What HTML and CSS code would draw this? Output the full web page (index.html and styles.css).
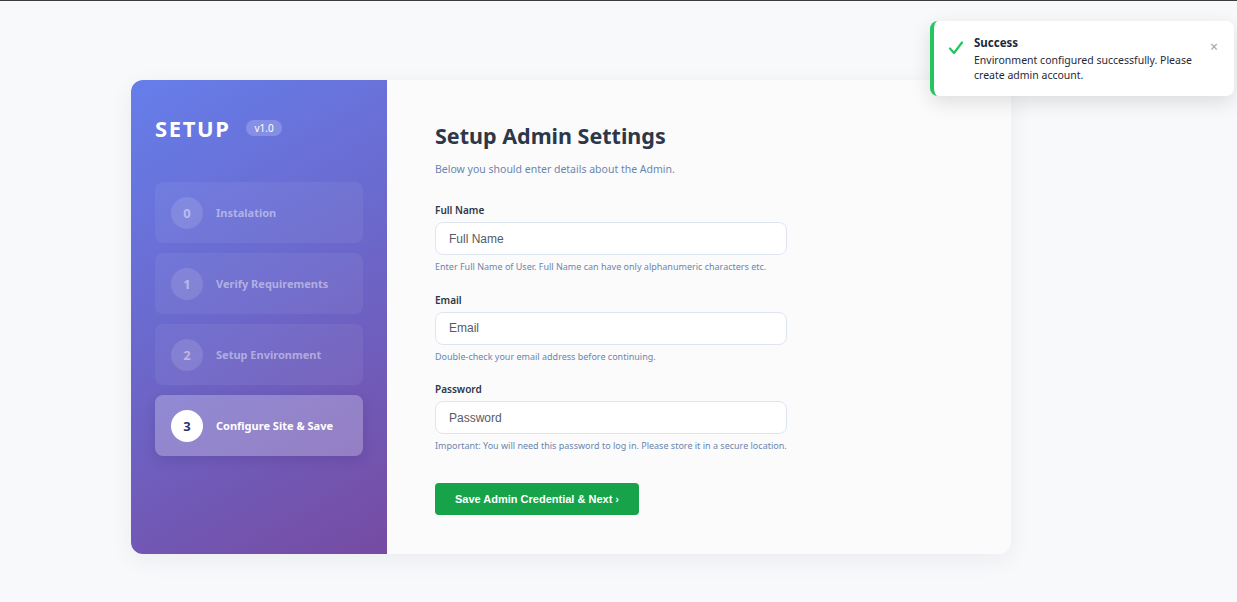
FILE: index.html
```html
<!DOCTYPE html>
<html lang="en">
<head>
    <meta charset="UTF-8">
    <meta name="viewport" content="width=device-width, initial-scale=1.0">
    <title>Setup</title>

    <link rel="stylesheet" href="styles.css">

</head>
<body>

    <div id="wrapper">

        <div class="setup_card">

            <aside class="sidebar">

                <div class="brand">
                    <span class="brand_title">SETUP</span>
                    <span class="brand_version">v1.0</span>
                </div>

                <ul class="steps">
                    <li class="step">
                        <span class="step_number">0</span>
                        <span class="step_label">Instalation</span>
                    </li>
                    <li class="step">
                        <span class="step_number">1</span>
                        <span class="step_label">Verify Requirements</span>
                    </li>
                    <li class="step">
                        <span class="step_number">2</span>
                        <span class="step_label">Setup Environment</span>
                    </li>
                    <li class="step active">
                        <span class="step_number">3</span>
                        <span class="step_label">Configure Site &amp; Save</span>
                    </li>
                </ul>

            </aside>

            <main class="content">

                <h1 class="title">Setup Admin Settings</h1>
                <p class="subtitle">Below you should enter details about the Admin.</p>

                <form class="admin_form">

                    <div class="field">
                        <label for="full_name">Full Name</label>
                        <input type="text" id="full_name" placeholder="Full Name">
                        <small>Enter Full Name of User. Full Name can have only alphanumeric characters etc.</small>
                    </div>

                    <div class="field">
                        <label for="email">Email</label>
                        <input type="email" id="email" placeholder="Email">
                        <small>Double-check your email address before continuing.</small>
                    </div>

                    <div class="field">
                        <label for="password">Password</label>
                        <input type="password" id="password" placeholder="Password">
                        <small>Important: You will need this password to log in. Please store it in a secure location.</small>
                    </div>

                    <button type="button" class="btn_next">Save Admin Credential &amp; Next &rsaquo;</button>

                </form>

            </main>

        </div>

    </div>

    <div class="toast">
        <svg class="toast_icon" width="16" height="16" viewBox="0 0 16 16">
            <path d="M2 8.5 L6 13 L14 2.5" fill="none" stroke="#22c55e" stroke-width="2.2" stroke-linecap="round" stroke-linejoin="round"/>
        </svg>
        <div class="toast_body">
            <strong>Success</strong>
            <p>Environment configured successfully. Please create admin account.</p>
        </div>
        <span class="toast_close">&times;</span>
    </div>

</body>
</html>
```

FILE: styles.css
```css
*{
    box-sizing: border-box;
}

body{
    margin: 0;
    padding: 0;

    min-height: 100vh;

    font-family: "Noto Sans", sans-serif;
    background-color: #f8f9fb;
    border-top: 1px solid #3c3c3c;
}

#wrapper{
    padding: 79px 0 0 131px;
}

.setup_card{
    width: 880px;
    height: 474px;

    display: flex;

    border-radius: 12px;
    overflow: hidden;
    background-color: #fbfbfc;
    box-shadow: 0 6px 24px rgba(30, 41, 59, 0.06);
}

/* sidebar */

.sidebar{
    width: 256px;
    flex-shrink: 0;

    padding: 33px 24px;

    background: linear-gradient(150deg, #667eea 0%, #6b68cc 45%, #764ba2 100%);
    color: white;
}

.brand{
    display: flex;
    align-items: center;
    gap: 16px;

    height: 30px;
    margin-bottom: 39px;
}

.brand_title{
    font-size: 22px;
    font-weight: 700;
    letter-spacing: 1.6px;
}

.brand_version{
    padding: 1px 8px;

    font-size: 10px;
    border-radius: 10px;
    background-color: rgba(255, 255, 255, 0.2);
}

.steps{
    list-style: none;
    margin: 0;
    padding: 0;

    display: flex;
    flex-direction: column;
    gap: 10px;
}

.step{
    height: 61px;
    padding: 0 16px;

    display: flex;
    align-items: center;
    gap: 13px;

    border-radius: 8px;
    background-color: rgba(255, 255, 255, 0.06);
    color: rgba(255, 255, 255, 0.45);

    font-size: 11px;
    font-weight: 700;
}

.step_number{
    width: 32px;
    height: 32px;

    display: grid;
    place-items: center;

    border-radius: 50%;
    background-color: rgba(255, 255, 255, 0.12);
    font-size: 13px;
}

.step.active{
    background-color: rgba(255, 255, 255, 0.25);
    color: white;
    box-shadow: 0 4px 12px rgba(40, 20, 90, 0.15);
}

.step.active .step_number{
    background-color: white;
    color: #2d3570;
}

/* content */

.content{
    flex: 1;
    padding: 41px 48px;
}

.title{
    margin: 0;

    font-size: 21.5px;
    line-height: 29px;
    font-weight: 700;
    color: #2d3748;
}

.subtitle{
    margin: 12px 0 27px;

    font-size: 10.5px;
    line-height: 14px;
    color: #6b86ad;
}

.field{
    display: flex;
    flex-direction: column;

    width: 352px;
    margin-bottom: 19.5px;
}

.field label{
    margin-bottom: 5px;

    font-size: 10px;
    line-height: 14px;
    font-weight: 600;
    color: #2d3748;
}

.field input{
    height: 33px;
    padding: 0 13px;

    font-family: "Liberation Sans", sans-serif;
    font-size: 12px;

    border: 1px solid #dfe5ef;
    border-radius: 8px;
    background-color: white;
}

.field input::placeholder{
    color: #555b66;
}

.field small{
    margin-top: 6px;

    font-size: 9px;
    line-height: 12px;
    color: #6b86ad;
}

.btn_next{
    margin-top: 11px;
    height: 32px;
    padding: 0 20px;

    font-family: "Liberation Sans", sans-serif;
    font-size: 11px;
    font-weight: 700;
    color: white;

    border: none;
    border-radius: 4px;
    background-color: #16a34a;
}

/* toast */

.toast{
    position: absolute;
    top: 21px;
    left: 930px;

    width: 304px;
    padding: 14px 16px 13px 14px;

    display: flex;
    gap: 10px;

    border-left: 4px solid #22c55e;
    border-radius: 8px;
    background-color: white;
    box-shadow: 0 6px 20px rgba(0, 0, 0, 0.12);
}

.toast_icon{
    margin-top: 5px;
    flex-shrink: 0;
}

.toast_body{
    flex: 1;

    font-size: 10.5px;
    color: #1f2937;

    strong{
        font-size: 11.5px;
    }

    p{
        margin: 3px 0 0;
        line-height: 15px;
    }
}

.toast_close{
    margin-top: 2px;

    font-size: 14px;
    color: #9ca3af;
}
```
